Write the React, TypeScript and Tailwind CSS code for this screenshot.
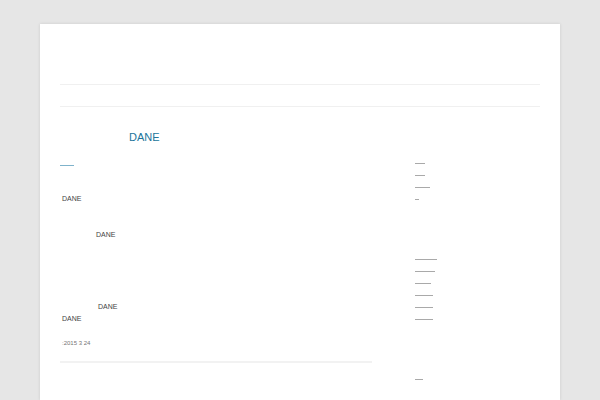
const sideGroups: number[][] = [
	[10, 10, 15, 4],
	[22, 20, 16, 18, 18, 18],
	[8]
];

const Line = ({ w }: { w: number }) => (
	<div className="h-[12px]">
		<span className="block h-[12px] border-b border-[#a9a9a9]" style={{ width: w }} />
	</div>
);

export default function App() {
	return (
		<div className="min-h-[400px] bg-[#e6e6e6] pt-6 font-['Liberation_Sans',Arial,sans-serif]">
			<div className="mx-auto w-[520px] min-h-[376px] bg-white px-5 shadow-[0_0_3px_rgba(0,0,0,0.12)]">
				<div className="h-[61px] border-b border-[#f0f0f0]" />
				<div className="h-[22px] border-b border-[#f0f0f0]" />
				<div className="flex">
					<div className="w-[312px]">
						<h1 className="mt-[22px] h-[16px] pl-[69px] text-[11px] leading-[16px] text-[#21759b]">DANE</h1>
						<div className="mt-[20px] h-px w-[14px] bg-[#7fb3cb]" />
						<div className="mt-[27px] h-[12px] pl-[2px] text-[7px] leading-[12px] text-[#444]">DANE</div>
						<div className="mt-[24px] h-[12px] pl-[36px] text-[7px] leading-[12px] text-[#444]">DANE</div>
						<div className="mt-[60px] h-[12px] pl-[38px] text-[7px] leading-[12px] text-[#444]">DANE</div>
						<div className="h-[12px] pl-[2px] text-[7px] leading-[12px] text-[#444]">DANE</div>
						<div className="mt-[12px] h-[12px] pl-[2px] text-[6px] leading-[12px] text-[#757575]">:2015 3 24</div>
						<div className="mt-[12px] border-b-2 border-[#f2f2f2]" />
					</div>
					<div className="ml-[43px] flex-1 pt-[45px]">
						{sideGroups.map((g, i) => (
							<div key={i} className={i > 0 ? "mt-[48px]" : ""}>
								{g.map((w, j) => (
									<Line key={j} w={w} />
								))}
							</div>
						))}
					</div>
				</div>
			</div>
		</div>
	);
}
